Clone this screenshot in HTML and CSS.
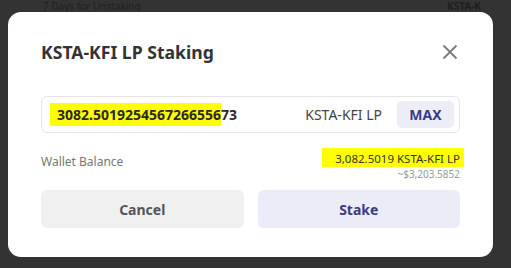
FILE: index.html
```html
<html><head><meta charset="UTF-8"><meta name="viewport" content="width=device-width, initial-scale=1.0"><title>KSTA-KFI LP Staking</title>
<link rel="stylesheet" href="styles.css">
</head>
<body>
<div class="page">
    <div class="page-top">
        <span class="page-note">7 Days for Unstaking</span>
        <span class="page-pair">KSTA-K</span>
    </div>
</div>

<div class="overlay">
    <div class="modal">
        <div class="modal-head">
            <h2>KSTA-KFI LP Staking</h2>
            <button class="close" aria-label="Close">
                <svg width="16" height="16" viewBox="0 0 16 16"><path d="M1.5 1.5L14.5 14.5M14.5 1.5L1.5 14.5" stroke="#7a7a7a" stroke-width="1.8" fill="none"/></svg>
            </button>
        </div>

        <div class="amount">
            <div class="amount-value"><span class="hl">3082.5019254567266556</span>73</div>
            <span class="amount-unit">KSTA-KFI LP</span>
            <button class="max">MAX</button>
        </div>

        <div class="balance">
            <span class="balance-label">Wallet Balance</span>
            <div class="balance-values">
                <span class="balance-main hl">3,082.5019 KSTA-KFI LP</span>
                <span class="balance-usd">~$3,203.5852</span>
            </div>
        </div>

        <div class="actions">
            <button class="btn cancel">Cancel</button>
            <button class="btn stake">Stake</button>
        </div>
    </div>
</div>
</body></html>
```

FILE: styles.css
```css
body {
    margin: 0;
    font-family: 'Noto Sans', 'Open Sans', sans-serif;
    background-color: #333333;
    width: 511px;
    height: 268px;
    overflow: hidden;
}

.page {
    height: 268px;
}

.page-top {
    display: flex;
    justify-content: space-between;
    padding: 0 30px 0 43px;
    height: 12px;
}

.page-note {
    font-size: 10px;
    line-height: 12px;
    color: #1e1e1e;
}

.page-pair {
    font-size: 10px;
    font-weight: bold;
    line-height: 12px;
    color: #1e1e1e;
}

.overlay {
    position: fixed;
    top: 0;
    left: 0;
    right: 0;
    bottom: 0;
    padding: 12px 18px 0 8px;
}

.modal {
    background-color: #ffffff;
    border-radius: 13px;
    height: 245px;
    box-sizing: border-box;
    padding: 26px 33px 0 33px;
}

.modal-head {
    display: flex;
    justify-content: space-between;
    align-items: center;
    height: 28px;
}

.modal-head h2 {
    margin: 0;
    font-size: 17.6px;
    font-weight: bold;
    color: #333333;
}

.close {
    border: none;
    background: none;
    padding: 0;
    margin-right: 2px;
    display: flex;
}

.amount {
    margin-top: 30px;
    height: 37px;
    box-sizing: border-box;
    border: 1px solid #e5e5e5;
    border-radius: 6px;
    display: flex;
    align-items: center;
    padding: 0 5px 0 8px;
}

.amount-value {
    flex: 1;
    font-size: 14px;
    font-weight: bold;
    color: #2a2a2a;
}

.hl {
    background-color: #ffff00;
}

.amount-value .hl {
    padding: 2px 0 2px 7px;
}

.amount-unit {
    font-size: 14px;
    color: #444444;
    margin-right: 15px;
}

.max {
    border: none;
    background-color: #ededf8;
    color: #3b3b86;
    font-family: inherit;
    font-size: 14px;
    font-weight: bold;
    border-radius: 5px;
    width: 57px;
    height: 27px;
}

.balance {
    display: flex;
    justify-content: space-between;
    margin-top: 15px;
}

.balance-label {
    font-size: 12px;
    color: #777777;
    margin-top: 5px;
}

.balance-values {
    display: flex;
    flex-direction: column;
    align-items: flex-end;
}

.balance-main {
    font-size: 11.5px;
    color: #333333;
    padding: 3px 4px 1px 13px;
    margin-right: -4px;
}

.balance-usd {
    font-size: 10px;
    color: #999999;
}

.actions {
    display: grid;
    grid-template-columns: 1fr 1fr;
    gap: 14px;
    margin-top: 9px;
}

.btn {
    border: none;
    height: 38px;
    border-radius: 6px;
    font-family: inherit;
    font-size: 14px;
    font-weight: bold;
}

.cancel {
    background-color: #f0f0f0;
    color: #555555;
}

.stake {
    background-color: #ececf8;
    color: #3b3b80;
}
```
